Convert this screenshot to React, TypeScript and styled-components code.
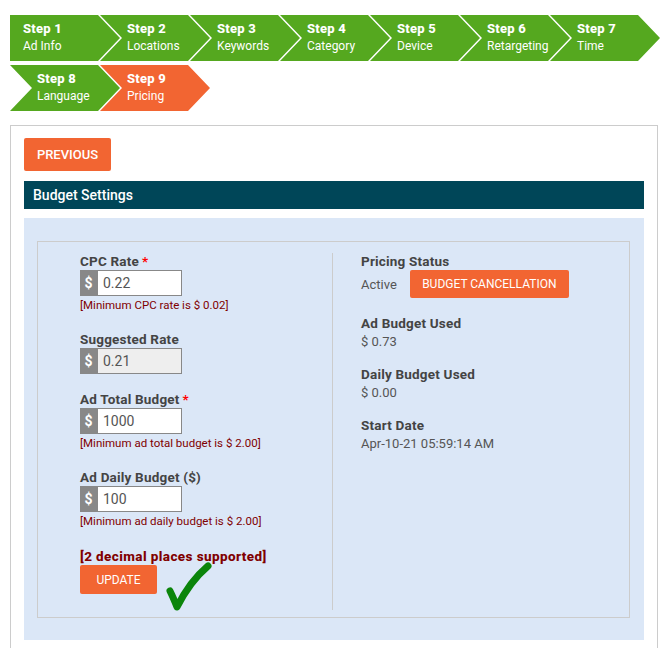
import React from "react";
import styled, { createGlobalStyle } from "styled-components";

const GlobalStyle = createGlobalStyle`
  body {
    margin: 0;
    background: #ffffff;
    font-family: Roboto, "Noto Sans", Arial, sans-serif;
    color: #444444;
  }
`;

const Page = styled.div`
  padding: 15px 10px 0;
`;

const Stepper = styled.div`
  display: flex;
  flex-wrap: wrap;
  row-gap: 4px;
  width: 648px;
  margin-bottom: 14px;
`;

const Step = styled.div<{ $active?: boolean; $first?: boolean }>`
  width: 110px;
  height: 46px;
  margin-right: -20px;
  box-sizing: border-box;
  padding: 5px 0 0 ${(p) => (p.$first ? "13px" : "27px")};
  background: ${(p) => (p.$active ? "#f26532" : "#55a81f")};
  color: #ffffff;
  clip-path: ${(p) =>
    p.$first
      ? "polygon(0 0, calc(100% - 22px) 0, 100% 50%, calc(100% - 22px) 100%, 0 100%)"
      : "polygon(0 0, calc(100% - 22px) 0, 100% 50%, calc(100% - 22px) 100%, 0 100%, 22px 50%)"};
`;

const StepTitle = styled.div`
  font-size: 13px;
  font-weight: 800;
  line-height: 17px;
  letter-spacing: 0.2px;
`;

const StepName = styled.div`
  font-size: 12px;
  line-height: 19px;
  white-space: nowrap;
`;

const Panel = styled.div`
  border: 1px solid #cccccc;
  padding: 12px 13px 30px;
`;

const OrangeButton = styled.button<{ $w: number; $h: number; $size: number; $weight?: number }>`
  width: ${(p) => p.$w}px;
  height: ${(p) => p.$h}px;
  padding: 0;
  border: none;
  border-radius: 2px;
  background: #f26532;
  color: #ffffff;
  font-family: inherit;
  font-size: ${(p) => p.$size}px;
  font-weight: ${(p) => p.$weight ?? 400};
  text-transform: uppercase;
  cursor: pointer;
`;

const SectionHeader = styled.div`
  margin-top: 10px;
  height: 28px;
  background: #004658;
  color: #ffffff;
  font-size: 14px;
  font-weight: 500;
  line-height: 28px;
  padding-left: 9px;
`;

const BlueArea = styled.div`
  margin-top: 9px;
  background: #dbe7f7;
  padding: 23px 14px 22px 13px;
`;

const InnerBox = styled.div`
  border: 1px solid #cccccc;
  display: grid;
  grid-template-columns: 295px 1fr;
  padding: 11px 0 7px;
`;

const LeftCol = styled.div`
  border-right: 1px solid #cccccc;
  padding-left: 42px;
  padding-bottom: 16px;
`;

const RightCol = styled.div`
  padding-left: 28px;
`;

const FieldGroup = styled.div`
  margin-bottom: 17px;
`;

const Label = styled.div`
  font-size: 13.5px;
  font-weight: 700;
  line-height: 17px;
  letter-spacing: 0.2px;
  color: #444444;
`;

const Required = styled.span`
  color: #ff0000;
  margin-left: 3px;
`;

const InputGroup = styled.div`
  display: flex;
  height: 26px;
`;

const Addon = styled.span`
  width: 17px;
  background: #888888;
  color: #ffffff;
  font-size: 14px;
  font-weight: 700;
  display: flex;
  align-items: center;
  justify-content: center;
`;

const Input = styled.input<{ $disabled?: boolean }>`
  width: 85px;
  height: 26px;
  box-sizing: border-box;
  border: 1px solid #888888;
  background: ${(p) => (p.$disabled ? "#eeeeee" : "#ffffff")};
  padding: 0 5px;
  font-family: inherit;
  font-size: 14px;
  color: #555555;
  outline: none;
`;

const Hint = styled.div`
  font-size: 11.5px;
  line-height: 17px;
  color: #800000;
  margin-top: 1px;
`;

const Decimal = styled.div`
  font-size: 13.5px;
  font-weight: 800;
  line-height: 17px;
  letter-spacing: 0.4px;
  color: #800000;
  margin-top: 18px;
`;

const UpdateRow = styled.div`
  position: relative;
`;

const CheckMark = styled.svg`
  position: absolute;
  left: 85px;
  top: -4px;
`;

const InfoBlock = styled.div`
  margin-bottom: 15px;
`;

const Value = styled.div`
  font-size: 13px;
  line-height: 19px;
  color: #555555;
`;

const StatusRow = styled.div`
  display: flex;
  align-items: center;
  gap: 13px;
  margin-bottom: 17px;
`;

const steps = [
  "Ad Info",
  "Locations",
  "Keywords",
  "Category",
  "Device",
  "Retargeting",
  "Time",
  "Language",
  "Pricing",
];

export default function App() {
  return (
    <>
      <GlobalStyle />
      <Page>
        <Stepper>
          {steps.map((name, i) => (
            <Step key={name} $first={i === 0} $active={i === 8}>
              <StepTitle>Step {i + 1}</StepTitle>
              <StepName>{name}</StepName>
            </Step>
          ))}
        </Stepper>

        <Panel>
          <OrangeButton $w={87} $h={33} $size={13} $weight={500}>
            Previous
          </OrangeButton>
          <SectionHeader>Budget Settings</SectionHeader>
          <BlueArea>
            <InnerBox>
              <LeftCol>
                <FieldGroup>
                  <Label>
                    CPC Rate<Required>*</Required>
                  </Label>
                  <InputGroup>
                    <Addon>$</Addon>
                    <Input defaultValue="0.22" />
                  </InputGroup>
                  <Hint>[Minimum CPC rate is $ 0.02]</Hint>
                </FieldGroup>

                <FieldGroup>
                  <Label>Suggested Rate</Label>
                  <InputGroup>
                    <Addon>$</Addon>
                    <Input $disabled readOnly defaultValue="0.21" />
                  </InputGroup>
                </FieldGroup>

                <FieldGroup>
                  <Label>
                    Ad Total Budget<Required>*</Required>
                  </Label>
                  <InputGroup>
                    <Addon>$</Addon>
                    <Input defaultValue="1000" />
                  </InputGroup>
                  <Hint>[Minimum ad total budget is $ 2.00]</Hint>
                </FieldGroup>

                <div>
                  <Label>Ad Daily Budget ($)</Label>
                  <InputGroup>
                    <Addon>$</Addon>
                    <Input defaultValue="100" />
                  </InputGroup>
                  <Hint>[Minimum ad daily budget is $ 2.00]</Hint>
                </div>

                <Decimal>[2 decimal places supported]</Decimal>
                <UpdateRow>
                  <OrangeButton $w={77} $h={29} $size={12}>
                    Update
                  </OrangeButton>
                  <CheckMark width="48" height="52" viewBox="0 0 48 52">
                    <path
                      d="M5 30 C8 36 10 41 12 46 C20 30 30 16 43 5"
                      fill="none"
                      stroke="#0b850b"
                      strokeWidth="7"
                      strokeLinecap="round"
                      strokeLinejoin="round"
                    />
                  </CheckMark>
                </UpdateRow>
              </LeftCol>

              <RightCol>
                <Label>Pricing Status</Label>
                <StatusRow>
                  <Value>Active</Value>
                  <OrangeButton $w={159} $h={28} $size={12}>
                    Budget Cancellation
                  </OrangeButton>
                </StatusRow>
                <InfoBlock>
                  <Label>Ad Budget Used</Label>
                  <Value>$ 0.73</Value>
                </InfoBlock>
                <InfoBlock>
                  <Label>Daily Budget Used</Label>
                  <Value>$ 0.00</Value>
                </InfoBlock>
                <InfoBlock>
                  <Label>Start Date</Label>
                  <Value>Apr-10-21 05:59:14 AM</Value>
                </InfoBlock>
              </RightCol>
            </InnerBox>
          </BlueArea>
        </Panel>
      </Page>
    </>
  );
}
